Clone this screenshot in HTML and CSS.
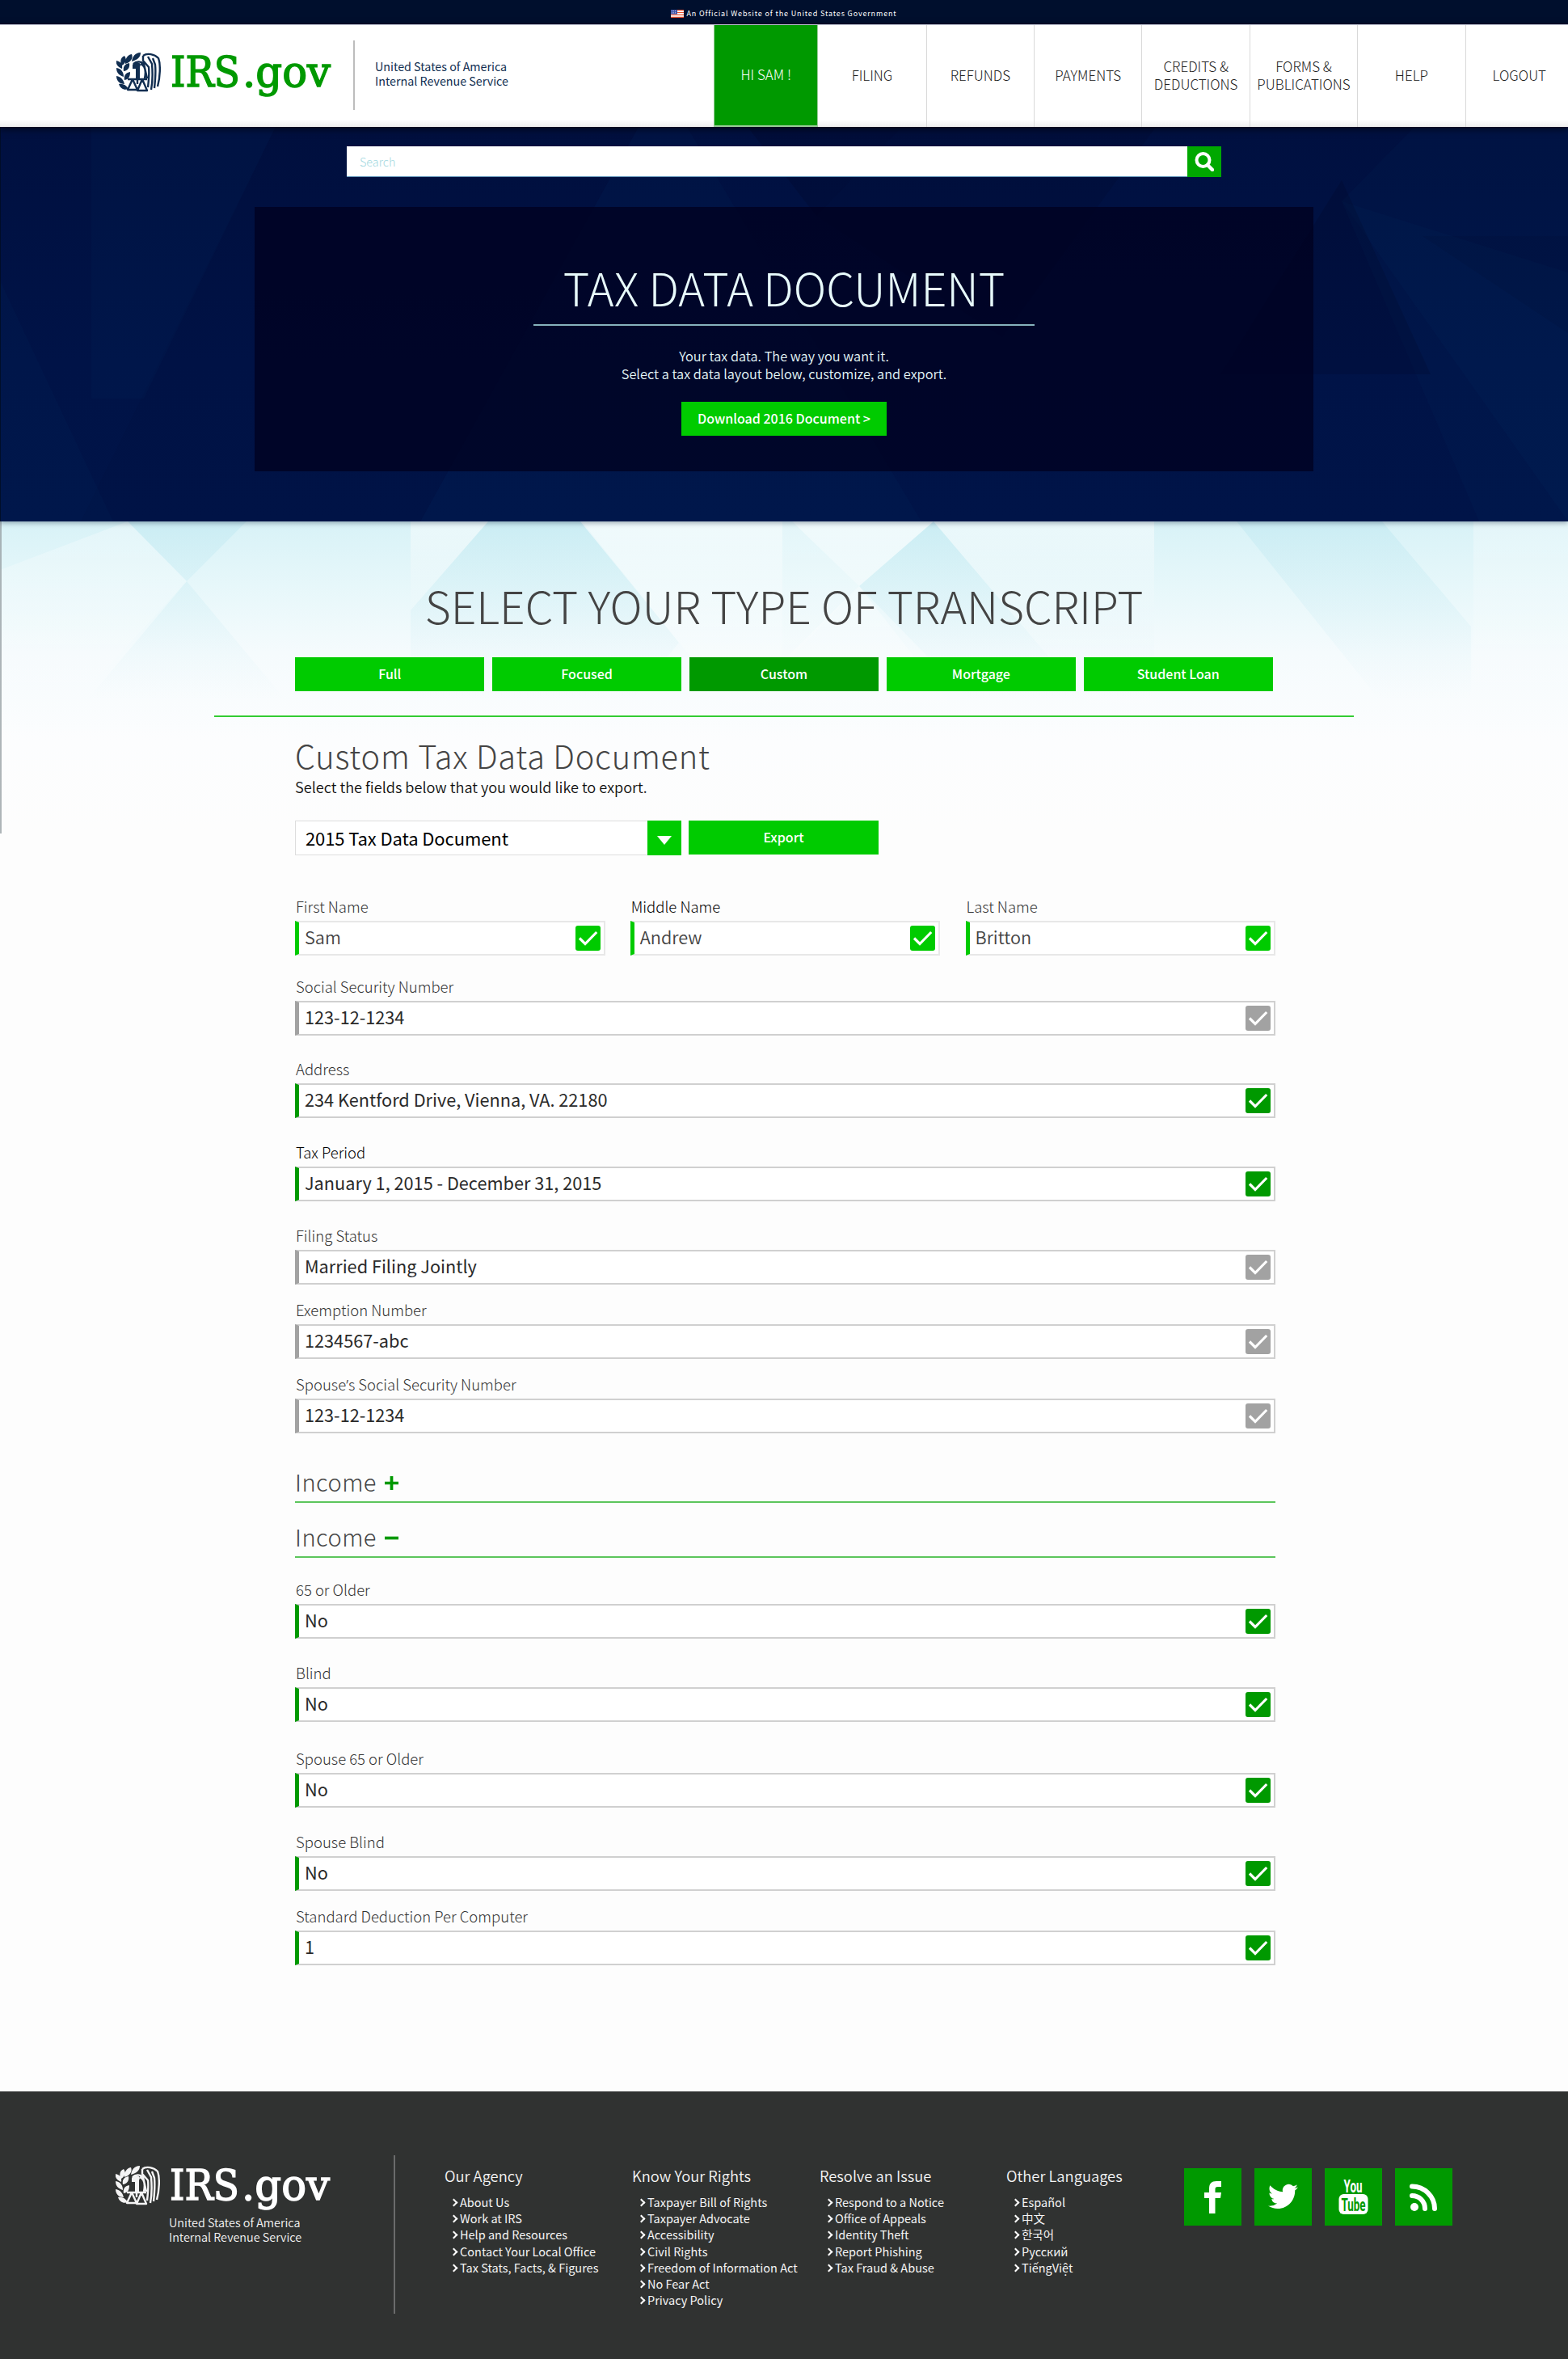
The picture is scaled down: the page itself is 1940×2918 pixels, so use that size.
FILE: index.html
```html
<!DOCTYPE html>
<html lang="en">
<head>
<meta charset="utf-8">
<title>IRS.gov - Tax Data Document</title>
<link rel="stylesheet" href="styles.css">
</head>
<body>
<svg class="defs" width="0" height="0" aria-hidden="true">
  <defs>
    <symbol id="eagle" viewBox="0 0 55 49">
      <g fill="currentColor">
        <path d="M0 10c5 1 8 4 7 10-5-2-8-5-7-10zM0 19c6 1 9 5 9 11-6-2-9-5-9-11zM0 29c6 1 9 5 10 10-6 0-10-4-10-10zM3 39c5-1 9 1 12 6-5 2-10 0-12-6zM16 13c1 6-2 9-7 10-1-5 1-9 7-10zM17 24c0 5-1 9-7 10-1-5 1-9 7-10zM10 4c3 4 2 9-3 12-3-4-2-10 3-12zM19 2c2 5-1 10-8 12 0-6 2-11 8-12zM30 0c0 6-4 9-11 11 1-6 4-11 11-11z"/>
        <path d="M20 15c2-4 9-4 10 0l-1 3v15h-5V20h-4z"/>
      </g>
      <g fill="none" stroke="currentColor" stroke-width="2.400" stroke-linejoin="round">
        <path d="M14 33h24M20 33l-6 13h12zM32 33l-6 14h12zM26 30v9"/>
        <path d="M33 4c5-4 14-2 19 3 3 8 2 24-1 35M33 4v6l7 8c1 8 0 16-1 25M39 5l5 9c1 12 1 22-1 32M45 7l3 8c1 10 0 20-1 29M30 14c6 2 7 8 5 18M21 14c4-4 10-3 13 0l4 18"/>
      </g>
    </symbol>
    <symbol id="check" viewBox="0 0 31 31">
      <path d="M5 15.500l7 7L26.200 8" fill="none" stroke="#fff" stroke-width="3.200"/>
    </symbol>
  </defs>
</svg>

<div class="topbar">
  <svg class="flag" viewBox="0 0 16 10"><path fill="#fff" d="M0 0h16v10H0z"/><path stroke="#e8502f" stroke-width="1.200" d="M0 .6h16M0 3.500h16M0 6.400h16M0 9.300h16"/><path fill="#3d52a8" d="M0 0h8v5.500H0z"/><path stroke="#fff" stroke-width=".7" stroke-dasharray="1 1" d="M1 1.500h6M1 3.800h6"/></svg>
  <span>An Official Website of the United States Government</span>
</div>

<header class="header">
  <a class="brand">
    <svg class="brand-mark"><use href="#eagle"/></svg>
    <svg class="brand-name" viewBox="0 0 200 60"><text y="45"><tspan x="-1" textLength="86" lengthAdjust="spacingAndGlyphs">IRS</tspan><tspan x="88" textLength="109" lengthAdjust="spacingAndGlyphs">.gov</tspan></text></svg>
  </a>
  <p class="agency">United States of America<br>Internal Revenue Service</p>
  <nav class="nav">
    <a class="active">HI SAM !</a>
    <a>FILING</a>
    <a>REFUNDS</a>
    <a>PAYMENTS</a>
    <a>CREDITS &amp;<br>DEDUCTIONS</a>
    <a>FORMS &amp;<br>PUBLICATIONS</a>
    <a>HELP</a>
    <a>LOGOUT</a>
  </nav>
</header>

<section class="hero">
  <svg class="facets" viewBox="0 0 1940 488" preserveAspectRatio="none" aria-hidden="true">
    <g fill="#003a78" fill-opacity=".08">
      <path d="M113 0h228L178 336H113z"/><path d="M790 0h60l290 488H520z"/>
      <path d="M1660 92l280 396V0h-190z"/><path d="M1660 92l170 396h110V180z"/>
      <path d="M0 190l140 298H0z"/>
    </g>
    <g fill="#000018">
      <path d="M113 135h1827v120L1760 135H113z" fill-opacity=".08"/>
      <path d="M925 0h190L1010 110z" fill-opacity=".16"/>
      <path d="M1010 110l105-110h315l-190 260z" fill-opacity=".1"/>
      <path d="M341 0h449L520 488H100z" fill-opacity=".04"/>
      <path d="M1660 66l110 240-260 0z" fill-opacity=".14"/>
    </g>
    <path fill="#000d22" fill-opacity=".8" d="M0 0h1v488H0z"/>
  </svg>
  <form class="search">
    <input type="text" placeholder="Search" aria-label="Search">
    <button type="button" aria-label="Search"><svg viewBox="0 0 24 24"><circle cx="10.500" cy="10" r="8" fill="none" stroke="#fff" stroke-width="4"/><path d="M16 16l6 6" stroke="#fff" stroke-width="4.500" stroke-linecap="round"/></svg></button>
  </form>
  <div class="panel">
    <h1>TAX DATA DOCUMENT</h1>
    <p class="lead">Your tax data. The way you want it.<br>Select a tax data layout below, customize, and export.</p>
    <a class="btn download">Download 2016 Document &gt;</a>
  </div>
</section>

<main class="main">
  <svg class="facets light" viewBox="0 0 1940 386" preserveAspectRatio="none" aria-hidden="true">
    <defs>
      <linearGradient id="sky" x1="0" y1="0" x2="0" y2="386" gradientUnits="userSpaceOnUse"><stop offset="0" stop-color="#d8f2f7"/><stop offset=".2" stop-color="#e6f7fa"/><stop offset=".42" stop-color="#f5fbfd"/><stop offset=".7" stop-color="#fcfdfe"/><stop offset="1" stop-color="#fdfdfd"/></linearGradient>
      <linearGradient id="deep" x1="0" y1="0" x2="0" y2="220" gradientUnits="userSpaceOnUse"><stop offset="0" stop-color="#8fd6e6" stop-opacity=".18"/><stop offset=".5" stop-color="#8fd6e6" stop-opacity=".1"/><stop offset="1" stop-color="#8fd6e6" stop-opacity="0"/></linearGradient>
      <linearGradient id="pale" x1="0" y1="0" x2="0" y2="260" gradientUnits="userSpaceOnUse"><stop offset="0" stop-color="#fff" stop-opacity=".6"/><stop offset="1" stop-color="#fff" stop-opacity="0"/></linearGradient>
    </defs>
    <path fill="url(#sky)" d="M0 0h1940v386H0z"/>
    <path fill="url(#deep)" d="M158 0h147l-74 74zM231 74l150 180H80zM508 0h212l120 150-90 110H508zM1155 0h273v250h-200L1063 80zM1530 0h180l110 130v120h-90z"/>
    <path fill="url(#pale)" d="M718 0h250v260H930zM508 0h96L508 110zM980 0h175l-92 80zM1155 0h273v250h-60zM1063 80l140 180H880z"/>
    <path fill="url(#pale)" fill-opacity=".5" d="M0 60l158-60 73 74L60 260H0zM968 0h12l83 80-95 100zM1823 0h117v260h-117z"/>
    <path fill="#9aa3a6" fill-opacity=".8" d="M0 0h2v386H0z"/>
  </svg>

  <div class="content">
    <h2 class="section-title">SELECT YOUR TYPE OF TRANSCRIPT</h2>
    <div class="tabs">
      <a class="btn">Full</a>
      <a class="btn">Focused</a>
      <a class="btn current">Custom</a>
      <a class="btn">Mortgage</a>
      <a class="btn">Student Loan</a>
    </div>
  </div>
  <hr class="divider">

  <div class="content">
    <h3 class="doc-title">Custom Tax Data Document</h3>
    <p class="doc-sub">Select the fields below that you would like to export.</p>
    <div class="picker">
      <div class="select"><span>2015 Tax Data Document</span><i><svg viewBox="0 0 18 11"><path d="M0 0h18L9 11z" fill="#fff"/></svg></i></div>
      <a class="btn">Export</a>
    </div>

    <div class="names">
      <div class="field bright"><label>First Name</label><div class="box"><span>Sam</span><svg><use href="#check"/></svg></div></div>
      <div class="field bright"><label class="dark">Middle Name</label><div class="box"><span>Andrew</span><svg><use href="#check"/></svg></div></div>
      <div class="field bright"><label>Last Name</label><div class="box"><span>Britton</span><svg><use href="#check"/></svg></div></div>
    </div>
    <div class="fields first">
      <div class="field off"><label>Social Security Number</label><div class="box"><span>123-12-1234</span><svg><use href="#check"/></svg></div></div>
      <div class="field near"><label>Address</label><div class="box"><span>234 Kentford Drive, Vienna, VA. 22180</span><svg><use href="#check"/></svg></div></div>
      <div class="field"><label class="dark">Tax Period</label><div class="box"><span>January 1, 2015 - December 31, 2015</span><svg><use href="#check"/></svg></div></div>
      <div class="field off"><label>Filing Status</label><div class="box"><span>Married Filing Jointly</span><svg><use href="#check"/></svg></div></div>
      <div class="field off close"><label>Exemption Number</label><div class="box"><span>1234567-abc</span><svg><use href="#check"/></svg></div></div>
      <div class="field off close"><label>Spouse<span class="apos">’</span>s Social Security Number</label><div class="box"><span>123-12-1234</span><svg><use href="#check"/></svg></div></div>
    </div>

    <h4 class="group">Income <svg viewBox="0 0 16 16"><path d="M0 8h16M8 0v16" stroke="#090" stroke-width="3.500"/></svg></h4>
    <h4 class="group open">Income <svg viewBox="0 0 16 16"><path d="M0 8h16" stroke="#090" stroke-width="3.500"/></svg></h4>

    <div class="fields second">
      <div class="field"><label>65 or Older</label><div class="box"><span>No</span><svg><use href="#check"/></svg></div></div>
      <div class="field"><label>Blind</label><div class="box"><span>No</span><svg><use href="#check"/></svg></div></div>
      <div class="field far"><label>Spouse 65 or Older</label><div class="box"><span>No</span><svg><use href="#check"/></svg></div></div>
      <div class="field"><label>Spouse Blind</label><div class="box"><span>No</span><svg><use href="#check"/></svg></div></div>
      <div class="field close"><label>Standard Deduction Per Computer</label><div class="box"><span>1</span><svg><use href="#check"/></svg></div></div>
    </div>
  </div>
</main>

<footer class="footer">
  <div class="foot-brand">
    <div class="brand">
      <svg class="brand-mark"><use href="#eagle"/></svg>
      <svg class="brand-name" viewBox="0 0 200 60"><text y="45"><tspan x="-1" textLength="86" lengthAdjust="spacingAndGlyphs">IRS</tspan><tspan x="88" textLength="109" lengthAdjust="spacingAndGlyphs">.gov</tspan></text></svg>
    </div>
    <p>United States of America<br>Internal Revenue Service</p>
  </div>
  <div class="foot-cols">
    <div><h5>Our Agency</h5><ul><li>About Us</li><li>Work at IRS</li><li>Help and Resources</li><li>Contact Your Local Office</li><li>Tax Stats, Facts, &amp; Figures</li></ul></div>
    <div><h5>Know Your Rights</h5><ul><li>Taxpayer Bill of Rights</li><li>Taxpayer Advocate</li><li>Accessibility</li><li>Civil Rights</li><li>Freedom of Information Act</li><li>No Fear Act</li><li>Privacy Policy</li></ul></div>
    <div><h5>Resolve an Issue</h5><ul><li>Respond to a Notice</li><li>Office of Appeals</li><li>Identity Theft</li><li>Report Phishing</li><li>Tax Fraud &amp; Abuse</li></ul></div>
    <div><h5>Other Languages</h5><ul><li>Español</li><li lang="zh">中文</li><li lang="ko">한국어</li><li lang="ru">Русский</li><li lang="vi">TiếngViệt</li></ul></div>
  </div>
  <div class="social">
    <a aria-label="Facebook"><svg viewBox="0 0 71 71"><path fill="#fff" d="M31 56V37h-6v-7h6v-5c0-6 3-9 9-9h6v7h-4c-3 0-3.500 1-3.500 3v4H46l-1 7h-6.500v19z"/></svg></a>
    <a aria-label="Twitter"><svg viewBox="0 0 71 71"><path fill="#fff" transform="translate(17 16.500) scale(1.540)" d="M23.950 4.570a10 10 0 01-2.820.77 4.960 4.960 0 002.160-2.720c-.95.550-2 .950-3.130 1.180a4.920 4.920 0 00-8.380 4.480C7.690 8.090 4.070 6.130 1.640 3.160a4.820 4.820 0 00-.67 2.480c0 1.710.87 3.210 2.190 4.100a4.900 4.900 0 01-2.230-.62v.06a4.920 4.920 0 003.950 4.830 5 5 0 01-2.210.08 4.940 4.940 0 004.600 3.420A9.870 9.870 0 010 19.540a13.990 13.990 0 007.550 2.210c9.050 0 14-7.500 14-13.990 0-.21 0-.42-.02-.63a9.940 9.940 0 002.460-2.550z"/></svg></a>
    <a aria-label="YouTube"><svg viewBox="0 0 71 71"><rect x="17.500" y="32" width="36" height="25" rx="6" fill="#fff"/><text class="yt" x="23.500" y="30" textLength="23" lengthAdjust="spacingAndGlyphs" fill="#fff">You</text><text class="yt" x="20.500" y="53" textLength="30" lengthAdjust="spacingAndGlyphs" fill="#090">Tube</text></svg></a>
    <a aria-label="RSS"><svg viewBox="0 0 71 71"><circle cx="24" cy="48" r="5" fill="#fff"/><path fill="none" stroke="#fff" stroke-width="6" stroke-linecap="round" d="M21 34c9 0 16 7 16 16M21 22.500c15.500 0 28 12.500 28 27.500"/></svg></a>
  </div>
</footer>
</body>
</html>
```
FILE: styles.css
```css
* { box-sizing: border-box; }

html { overflow-x: hidden; }

body {
  margin: 0;
  width: 1940px;
  background: #fdfdfd;
  color: #333;
  font-family: "Noto Sans CJK SC", "Noto Sans", sans-serif;
  font-weight: 300;
}

h1, h2, h3, h4, h5, p, ul { margin: 0; padding: 0; font-weight: inherit; }
ul { list-style: none; }
svg { display: block; }
.defs { position: absolute; }

.topbar {
  height: 30px;
  background: #000f2d;
  color: #fff;
  display: flex;
  justify-content: center;
  align-items: center;
  gap: 3px;
  padding-top: 3px;
  font-size: 9px;
  line-height: 14px;
  font-weight: 400;
  letter-spacing: .85px;
}
.flag { width: 16px; height: 10px; }

.header {
  position: relative;
  height: 127px;
  border-top: 1px solid #b8bccb;
  background: linear-gradient(#fff 117px, #eee 126px);
  box-shadow: 0 3px 8px rgba(0, 0, 0, .6);
  display: flex;
  z-index: 2;
}
.header .brand { margin: 19px 0 0 144px; padding-top: 15px; height: 86px; width: 295px; border-right: 2px solid #bdbdbd; color: #112e51; }
.brand { display: flex; gap: 13px; }
.brand-mark { width: 55px; height: 49px; }
.brand-name { width: 200px; height: 60px; overflow: visible; margin-top: -3px; }
.brand-name text { font-family: "DejaVu Serif", serif; font-size: 52px; fill: #090; stroke: #090; stroke-width: 1.500px; }
.agency { margin: 42px 0 0 25px; font-size: 14.300px; line-height: 18px; font-weight: 400; color: #112e51; }

.nav { margin: 0 -6px 0 auto; display: flex; }
.nav a {
  width: 133.400px;
  border-left: 1px solid #d9d9d9;
  display: flex;
  align-items: center;
  justify-content: center;
  text-align: center;
  font-size: 17px;
  line-height: 21.500px;
  padding-bottom: 3px;
  color: #222;
}
.nav a.active { width: 129px; background: #090; color: #fff; border: 1px solid #9c9; border-width: 0 1px 2px; }
.nav a.active + a { border-left: 0; }

.hero {
  position: relative;
  height: 488px;
  padding-top: 24px;
  background: linear-gradient(#001040, #001347 60%, #001448);
  box-shadow: 0 2px 6px rgba(0, 20, 50, .35);
  z-index: 1;
}
.facets { position: absolute; left: 0; top: 0; width: 1940px; height: 488px; }
.search { position: relative; width: 1082px; height: 38px; margin: 0 auto; display: flex; }
.search input { flex: 1; border: 0; border-bottom: 1px solid #5f93b8; background: #fff; padding: 0 16px; font: 300 14.400px "Noto Sans CJK SC", sans-serif; }
.search input::placeholder { color: #a3d8e0; opacity: 1; }
.search button { width: 42px; border: 0; padding: 0; background: #00a800; display: flex; align-items: center; justify-content: center; }
.search button svg { width: 24px; height: 24px; }

.panel {
  position: relative;
  width: 1310px;
  height: 327px;
  margin: 37px auto 0;
  background: rgba(0, 0, 29, .72);
  color: #e4f6f8;
  display: flex;
  flex-direction: column;
  align-items: center;
}
.panel h1 { width: 620px; margin-top: 63px; height: 84px; border-bottom: 2px solid #86b3bd; text-align: center; font-size: 55.700px; line-height: 72px; color: #e8fbfc; white-space: nowrap; }
.lead { margin-top: 26px; text-align: center; font-size: 16.350px; line-height: 22px; font-weight: 350; }

.btn {
  height: 42px;
  background: #00cb00;
  color: #fff;
  font-size: 16px;
  font-weight: 500;
  line-height: 41px;
  text-align: center;
}
.btn.current { background: #090; }
.download { width: 254px; margin-top: 24px; }

.main { position: relative; height: 1942px; border-left: 1px solid transparent; margin-left: -1px; }
.light { height: 386px; left: 0; }
.content { position: relative; width: 1213px; margin-left: 365px; }
.section-title { padding-top: 64px; width: 1210px; font-size: 55.200px; line-height: 78px; text-align: center; color: #444; white-space: nowrap; }
.tabs { width: 1210px; margin-top: 26px; display: grid; grid-template-columns: repeat(5, 1fr); gap: 9.400px; }
.divider { position: relative; width: 1410px; height: 2px; margin: 30px 0 0 265px; border: 0; background: #3c3; }

.doc-title { margin-top: 20px; font-size: 39.700px; line-height: 54px; letter-spacing: .8px; color: #444; }
.doc-sub { font-size: 18.150px; line-height: 24px; font-weight: 350; color: #111; }
.picker { margin-top: 30px; display: flex; gap: 9px; }
.picker .btn { width: 235px; }
.select { width: 478px; height: 43px; border: 1px solid #ddd; background: #fff; display: flex; justify-content: space-between; }
.select span { padding-left: 12px; font-size: 22px; line-height: 41px; font-weight: 400; letter-spacing: -.1px; color: #000; }
.select i { width: 42px; margin: -1px; background: #00cb00; display: flex; align-items: center; justify-content: center; padding-top: 5px; }
.select svg { width: 18px; height: 11px; }

.names { margin-top: 51px; display: grid; grid-template-columns: repeat(3, 383.500px); gap: 31.250px; }
.field label { display: block; height: 24px; margin: 0 0 6px 1px; font-size: 18.500px; line-height: 24px; color: #333; }
.field label.dark { color: #000; }
.apos { font-family: "Noto Sans", sans-serif; }
.box {
  height: 43px;
  border: 2px solid #d0d0d0;
  border-left: 5px solid #090;
  background: #fff;
  display: flex;
  justify-content: space-between;
  align-items: center;
  padding: 0 4px 0 7px;
}
.box span { font-size: 21.700px; line-height: 35px; margin-bottom: 4px; font-weight: 400; color: #2a2a2a; }
.box svg { width: 31px; height: 31px; border-radius: 3px; background: #090; }
.bright .box { border-color: #e8e8e8; border-left-color: #00cb00; }
.bright .box span { font-weight: 350; color: #444; }
.bright .box svg { background: #00cb00; }
.off .box { border-left-color: #a2a2a2; }
.off .box svg { background: #a2a2a2; }
.fields { display: flex; flex-direction: column; }
.fields .field + .field { margin-top: 30px; }
.fields .field.near { margin-top: 29px; }
.fields .field.close { margin-top: 19px; }
.fields .field.far { margin-top: 33px; }
.first { margin-top: 26px; }

.group { height: 68px; border-bottom: 2px solid #5cc65c; font-size: 29px; line-height: 30px; letter-spacing: .5px; color: #444; display: flex; align-items: flex-start; gap: 10px; }
.fields + .group { height: 42px; margin-top: 44px; }
.group.open { padding-top: 26px; }
.group svg { width: 17px; height: 17px; margin-top: 9px; }
.second { margin-top: 27px; }

.footer { height: 331px; background: #303231; color: #f4f4f4; display: flex; padding-top: 79px; }
.foot-brand { width: 489px; height: 196px; border-right: 2px solid #6a6b6b; padding: 13px 0 0 143px; }
.foot-brand .brand-name text { fill: #fff; stroke: #fff; }
.foot-brand p { margin: 4px 0 0 66px; font-size: 14.400px; line-height: 18px; font-weight: 350; }
.foot-cols { display: grid; grid-template-columns: 232px 232px 231px 220px; padding-left: 61px; }
.foot-cols h5 { margin-top: 12px; font-size: 18.350px; line-height: 26px; font-weight: 350; }
.foot-cols ul { margin-top: 10px; }
.foot-cols li { position: relative; padding-left: 19px; font-size: 14.500px; line-height: 20.200px; font-weight: 400; white-space: nowrap; }
.foot-cols li::before { content: ""; position: absolute; left: 8px; top: 7px; width: 5px; height: 5px; border: solid #fff; border-width: 2px 2px 0 0; transform: rotate(45deg); }
.social { display: flex; gap: 16px; margin-top: 16px; }
.social a { width: 71px; height: 71px; background: #090; }
.yt { font-family: "Roboto", sans-serif; font-weight: 700; font-size: 22px; }
```
